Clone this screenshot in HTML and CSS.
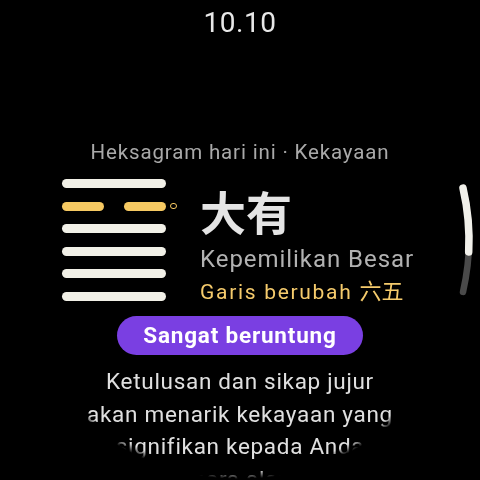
FILE: index.html
```html
<!DOCTYPE html>
<html lang="id">
<head>
<meta charset="utf-8">
<link rel="stylesheet" href="styles.css">
</head>
<body>
<div class="watch">
  <main class="screen">
    <div class="time">10.10</div>
    <div class="subtitle">Heksagram hari ini · Kekayaan</div>
    <section class="hex-row">
      <div class="hexagram">
        <div class="line-row"><span class="line solid"></span><span class="marker-slot"></span></div>
        <div class="line-row"><span class="line broken"><span class="seg"></span><span class="seg"></span></span><span class="marker"></span></div>
        <div class="line-row"><span class="line solid"></span><span class="marker-slot"></span></div>
        <div class="line-row"><span class="line solid"></span><span class="marker-slot"></span></div>
        <div class="line-row"><span class="line solid"></span><span class="marker-slot"></span></div>
        <div class="line-row"><span class="line solid"></span><span class="marker-slot"></span></div>
      </div>
      <div class="hex-info">
        <div class="hex-name">大有</div>
        <div class="hex-title">Kepemilikan Besar</div>
        <div class="hex-change">Garis berubah <span class="cjk">六五</span></div>
      </div>
    </section>
    <div class="badge-wrap"><span class="badge">Sangat beruntung</span></div>
    <p class="reading">Ketulusan dan sikap jujur<br>akan menarik kekayaan yang<br>signifikan kepada Anda<br>secara alami.</p>
  </main>
  <svg class="scroll" width="480" height="480" viewBox="0 0 480 480">
    <path d="M463 188.1 A229 229 0 0 1 463 291.9" fill="none" stroke="#4a4a4a" stroke-width="6.5" stroke-linecap="round"/>
    <path d="M463 188.1 A229 229 0 0 1 468.7 252" fill="none" stroke="#f1f0ea" stroke-width="7.5" stroke-linecap="round"/>
  </svg>
</div>
</body>
</html>
```

FILE: styles.css
```css
html, body {
  margin: 0;
  padding: 0;
  background: #000;
}
body {
  width: 480px;
  height: 480px;
  overflow: hidden;
  font-family: Roboto, "Noto Sans", "Noto Sans CJK SC", sans-serif;
}
.watch {
  position: relative;
  width: 480px;
  height: 480px;
  overflow: hidden;
}
.screen {
  width: 480px;
  height: 480px;
  display: flex;
  flex-direction: column;
  -webkit-mask-image: radial-gradient(circle 240px at 240px 240px, #000 231px, transparent 239px);
  mask-image: radial-gradient(circle 240px at 240px 240px, #000 231px, transparent 239px);
}
.time {
  padding-top: 7px;
  height: 32px;
  line-height: 32px;
  font-size: 28px;
  color: #e8e8e8;
  text-align: center;
  letter-spacing: 0.5px;
}
.subtitle {
  margin-top: 101px;
  height: 24px;
  line-height: 24px;
  font-size: 20.5px;
  letter-spacing: 0.85px;
  color: #a9a9a9;
  text-align: center;
}
.hex-row {
  margin-top: 15px;
  display: flex;
  padding-left: 62px;
  gap: 22px;
}
.hexagram {
  display: flex;
  flex-direction: column;
  gap: 13.6px;
}
.line-row {
  display: flex;
  align-items: center;
  gap: 4px;
  height: 9px;
}
.line {
  width: 104px;
  height: 9px;
  border-radius: 4.5px;
}
.solid {
  background: #f1f0e7;
}
.broken {
  display: flex;
  justify-content: space-between;
}
.seg {
  width: 42px;
  height: 9px;
  border-radius: 4.5px;
  background: #f6c962;
}
.marker-slot {
  width: 8px;
}
.marker {
  width: 4.6px;
  height: 4.6px;
  border: 1.7px solid #f6c962;
  border-radius: 50%;
}
.hex-info {
  display: flex;
  flex-direction: column;
  padding-top: 6px;
}
.hex-name {
  font-family: "Noto Sans CJK SC", "Noto Sans CJK JP", sans-serif;
  font-weight: 700;
  font-size: 46px;
  line-height: 50px;
  height: 50px;
  color: #e4e4e4;
}
.hex-title {
  margin-top: 10px;
  height: 28px;
  font-size: 24px;
  line-height: 28px;
  letter-spacing: 0.95px;
  color: #b2b2b2;
  white-space: nowrap;
}
.hex-change {
  margin-top: 6px;
  height: 26px;
  font-size: 21px;
  line-height: 26px;
  letter-spacing: 1.7px;
  color: #f5cb6c;
  white-space: nowrap;
}
.cjk {
  font-family: "Noto Sans CJK SC", "Noto Sans CJK JP", sans-serif;
  font-size: 22px;
  line-height: 20px;
  letter-spacing: 0;
}
.badge-wrap {
  margin-top: 11px;
  display: flex;
  justify-content: center;
}
.badge {
  width: 246px;
  height: 39px;
  line-height: 39px;
  border-radius: 20px;
  background: #7a3fe2;
  color: #fff;
  font-weight: 700;
  font-size: 22.5px;
  letter-spacing: 0.8px;
  text-align: center;
}
.reading {
  margin: 10px 0 0;
  font-size: 22.5px;
  line-height: 32.5px;
  letter-spacing: 0.7px;
  color: #e0e0e0;
  text-align: center;
  white-space: nowrap;
}
.scroll {
  position: absolute;
  left: 0;
  top: 0;
}
```
